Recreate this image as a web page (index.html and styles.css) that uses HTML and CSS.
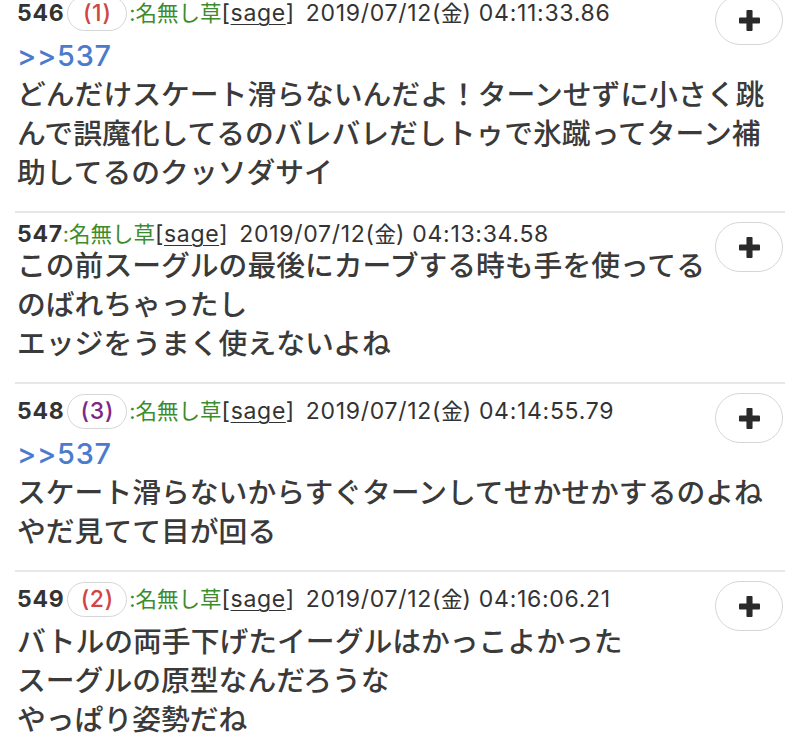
FILE: index.html
```html
<!DOCTYPE html>
<html lang="ja">
<head>
<meta charset="utf-8">
<title>スレッド</title>
<link rel="stylesheet" href="styles.css">
</head>
<body>
<div class="thread">
  <article class="post">
    <button class="add" type="button" aria-label="追加"><svg viewBox="0 0 22 22" width="21" height="21"><rect x="0" y="7.8" width="22" height="6.4" rx="1"/><rect x="7.8" y="0" width="6.4" height="22" rx="1"/></svg></button>
    <div class="head tall"><span class="num">546</span><span class="refs red">(1)</span><span class="name">:名無し草</span><span class="mail">[<u>sage</u>]</span><span class="date">2019/07/12(<span class="kanji">金</span>) 04:11:33.86</span></div>
    <div class="body"><a class="anchor">&gt;&gt;537</a><br>どんだけスケート滑らないんだよ！ターンせずに小さく跳<br>んで誤魔化してるのバレバレだしトゥで氷蹴ってターン補<br>助してるのクッソダサイ</div>
  </article>
  <article class="post">
    <button class="add" type="button" aria-label="追加"><svg viewBox="0 0 22 22" width="21" height="21"><rect x="0" y="7.8" width="22" height="6.4" rx="1"/><rect x="7.8" y="0" width="6.4" height="22" rx="1"/></svg></button>
    <div class="head"><span class="num">547</span><span class="name">:名無し草</span><span class="mail">[<u>sage</u>]</span><span class="date">2019/07/12(<span class="kanji">金</span>) 04:13:34.58</span></div>
    <div class="body">この前スーグルの最後にカーブする時も手を使ってる<br>のばれちゃったし<br>エッジをうまく使えないよね</div>
  </article>
  <article class="post">
    <button class="add" type="button" aria-label="追加"><svg viewBox="0 0 22 22" width="21" height="21"><rect x="0" y="7.8" width="22" height="6.4" rx="1"/><rect x="7.8" y="0" width="6.4" height="22" rx="1"/></svg></button>
    <div class="head tall"><span class="num">548</span><span class="refs purple">(3)</span><span class="name">:名無し草</span><span class="mail">[<u>sage</u>]</span><span class="date">2019/07/12(<span class="kanji">金</span>) 04:14:55.79</span></div>
    <div class="body"><a class="anchor">&gt;&gt;537</a><br>スケート滑らないからすぐターンしてせかせかするのよね<br>やだ見てて目が回る</div>
  </article>
  <article class="post">
    <button class="add" type="button" aria-label="追加"><svg viewBox="0 0 22 22" width="21" height="21"><rect x="0" y="7.8" width="22" height="6.4" rx="1"/><rect x="7.8" y="0" width="6.4" height="22" rx="1"/></svg></button>
    <div class="head tall"><span class="num">549</span><span class="refs red">(2)</span><span class="name">:名無し草</span><span class="mail">[<u>sage</u>]</span><span class="date">2019/07/12(<span class="kanji">金</span>) 04:16:06.21</span></div>
    <div class="body">バトルの両手下げたイーグルはかっこよかった<br>スーグルの原型なんだろうな<br>やっぱり姿勢だね</div>
  </article>
</div>
</body>
</html>
```
FILE: styles.css
```css
html, body {
  margin: 0;
  padding: 0;
  background: #ffffff;
}
body {
  font-family: Inter, "Noto Sans CJK JP", sans-serif;
  color: #333333;
  overflow: hidden;
}
.thread {
  margin: -14px 15px 0;
}
.post {
  position: relative;
  padding: 10px 0 19px 2px;
  border-bottom: 2px solid #e7e7ea;
}
.add {
  position: absolute;
  top: 9px;
  right: 2px;
  width: 68px;
  height: 50px;
  border: 1.5px solid #d6d6d6;
  border-radius: 25px;
  background: #ffffff;
  padding: 0;
  display: flex;
  align-items: center;
  justify-content: center;
}
.add svg {
  fill: #2a2a2a;
}
.head {
  display: flex;
  align-items: center;
  font-size: 23px;
  letter-spacing: 0.7px;
  line-height: 23px;
  min-height: 23px;
  white-space: nowrap;
  color: #333333;
}
.head.tall {
  margin-bottom: 5px;
}
.num {
  font-weight: 700;
}
.refs {
  box-sizing: border-box;
  height: 35px;
  width: 60px;
  margin: 0 2px 0 3px;
  border: 1.5px solid #d6d6d6;
  border-radius: 18px;
  display: flex;
  align-items: center;
  justify-content: center;
  font-weight: 500;
}
.refs.red {
  color: #d04545;
}
.refs.purple {
  color: #7d2a85;
}
.name {
  color: #3a8c2c;
  font-size: 21.5px;
  letter-spacing: 0;
}
.mail u {
  text-decoration-thickness: 1px;
  text-underline-offset: 3px;
}
.date {
  margin-left: 11px;
}
.kanji {
  font-size: 21.5px;
  letter-spacing: 0;
}
.body {
  font-size: 28.8px;
  line-height: 39px;
  color: #3a3a3a;
  font-weight: 500;
}
.anchor {
  color: #4a7bcc;
  text-decoration: none;
  letter-spacing: 0.8px;
}
```
